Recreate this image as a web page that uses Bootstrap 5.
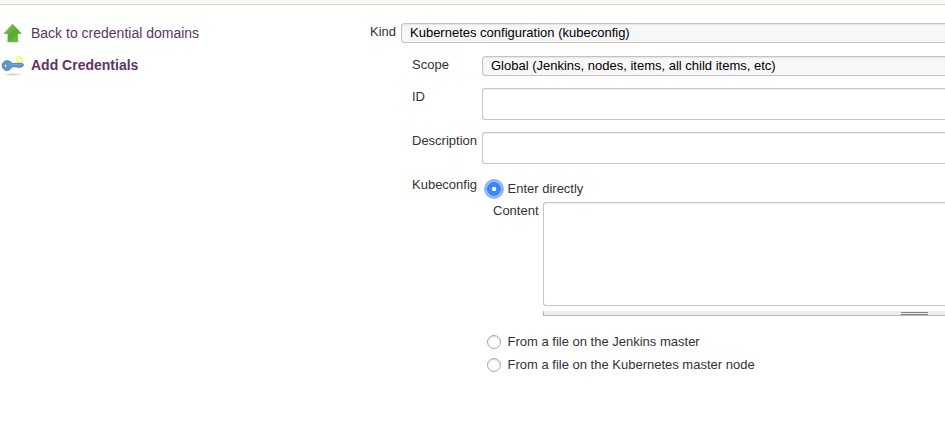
<!DOCTYPE html>
<html lang="en">
<head>
<meta charset="utf-8">
<title>Add Credentials</title>
<link href="https://cdn.jsdelivr.net/npm/bootstrap@5.3.0/dist/css/bootstrap.min.css" rel="stylesheet">
<style>
body{font:13px/16px "Liberation Sans",Arial,sans-serif;color:#333;background:#fff;overflow:hidden;height:422px}
.crumbs{height:5px;background:#f6faf2;border-bottom:1px solid #d3d7cf}
.side{width:370px;padding:17px 0 0 1px}
.side a{color:#5c3566;font-size:14px;line-height:22px;height:22px;margin-bottom:10px;gap:6px}
.side svg{width:24px;height:24px;flex:none}
.main-form{min-width:0;padding-top:18px}
.lbl{flex:none;line-height:16px;padding-top:1px}
.kind-lbl{width:31px}
.field-lbl{width:70px}
.sub-form{margin-left:42px}
.main-form .form-select{height:20px;padding:0 8px;border:1px solid #c3c3c3;border-right:0;border-radius:4px 0 0 4px;background:#f7f7f7;box-shadow:inset 0 1px 1px #e4e4e4;color:#000;font-size:13px;line-height:17px}
.main-form .form-control{border:1px solid #c6c6c6;border-right:0;border-radius:3px 0 0 3px;box-shadow:inset 0 1px 1px #eee;padding:4px;min-height:0;resize:none}
.main-form input.form-control{height:32px}
.main-form textarea.form-control{height:104px}
.gap-s{margin-bottom:13px}
.gap-m{margin-bottom:12px}
.choice{display:flex;align-items:center;height:23px;gap:6.500px;padding-left:5px}
.choice .form-check-input{width:14px;height:14px;margin:0;border:1px solid #a8a8a8;box-shadow:inset 0 1px 1px #ddd;flex:none}
.choice .form-check-input:checked{background:radial-gradient(circle,#fff 0 1.8px,#3b87fb 2.6px);border-color:#2f74e3;box-shadow:0 0 0 3px #8db8f8}
.enter{height:26px;padding-bottom:1px}
.content-row{padding-left:11px}
.content-lbl{width:50px}
.others{padding-top:14px}
.grip{height:5px;background:#ededed;border:solid #b5b5b5;border-width:0 0 1px 1px;margin-top:5px;padding:1px 0 0 357px}
.grip span{display:block;width:27px;height:3px;border:solid #858585;border-width:1px 0}
</style>
<script src="https://cdn.jsdelivr.net/npm/bootstrap@5.3.0/dist/js/bootstrap.bundle.min.js"></script>
</head>
<body>
<div class="crumbs"></div>
<div class="d-flex">
  <nav class="side flex-shrink-0">
    <a href="#" class="d-flex align-items-center text-decoration-none">
      <svg viewBox="0 0 24 24"><defs><linearGradient id="leaf" x2="1" y2="1"><stop offset="0" stop-color="#8ccb62"/><stop offset=".55" stop-color="#55a832"/><stop offset="1" stop-color="#6cd32c"/></linearGradient><radialGradient id="shade"><stop offset="0" stop-color="#777" stop-opacity=".65"/><stop offset="1" stop-color="#777" stop-opacity="0"/></radialGradient></defs>
      <ellipse cx="12" cy="20.300" rx="9" ry="2" fill="url(#shade)"/><path d="M11.600 3.300 20.200 12.400H16.600V20.300H7V12.400H3.200Z" fill="url(#leaf)" stroke="#62a846" stroke-width=".8" stroke-linejoin="round"/></svg>
      <span>Back to credential domains</span></a>
    <a href="#" class="d-flex align-items-center text-decoration-none fw-bold">
      <svg viewBox="0 0 24 24"><ellipse cx="12" cy="21.500" rx="11" ry="1.600" fill="url(#shade)" opacity=".6"/>
      <circle cx="18.300" cy="6.600" r="3.600" fill="#fdf68c"/><circle cx="18.300" cy="6.600" r="1.500" fill="#fffde0"/>
      <path d="M6 7.800C8.600 7.800 10 8.900 10.800 10.400H21.300L22.600 12 21.200 13.800H19.800L19 14.800 18 13.800 17 14.800 16 13.800H10.800C10 15.900 8.500 17.400 6 17.400A4.800 4.800 0 0 1 6 7.800Z" fill="#5f97cf" stroke="#3d6ea8" stroke-width=".8" stroke-linejoin="round"/><path d="M10 11.300H21" stroke="#80b0de" stroke-width=".7"/><circle cx="4.500" cy="12.700" r="1.500" fill="#e6edf5" stroke="#3d6ea8" stroke-width=".6"/></svg>
      <span>Add Credentials</span></a>
  </nav>
  <form class="main-form flex-grow-1">
    <div class="d-flex gap-s">
      <label class="lbl kind-lbl">Kind</label>
      <div class="form-select" role="combobox">Kubernetes configuration (kubeconfig)</div>
    </div>
    <div class="sub-form">
      <div class="d-flex gap-m">
        <label class="lbl field-lbl">Scope</label>
        <div class="form-select" role="combobox">Global (Jenkins, nodes, items, all child items, etc)</div>
      </div>
      <div class="d-flex gap-m">
        <label class="lbl field-lbl" for="cid">ID</label>
        <input id="cid" class="form-control">
      </div>
      <div class="d-flex gap-m">
        <label class="lbl field-lbl" for="desc">Description</label>
        <input id="desc" class="form-control">
      </div>
      <div class="d-flex">
        <div class="lbl field-lbl">Kubeconfig</div>
        <div class="flex-grow-1">
          <label class="choice enter"><input class="form-check-input" type="radio" name="src" checked>Enter directly</label>
          <div class="d-flex content-row">
            <label class="lbl content-lbl" for="content">Content</label>
            <div class="flex-grow-1">
              <textarea id="content" class="form-control d-block"></textarea>
              <div class="grip"><span></span></div>
            </div>
          </div>
          <div class="others">
            <label class="choice"><input class="form-check-input" type="radio" name="src">From a file on the Jenkins master</label>
            <label class="choice"><input class="form-check-input" type="radio" name="src">From a file on the Kubernetes master node</label>
          </div>
        </div>
      </div>
    </div>
  </form>
</div>
</body>
</html>
